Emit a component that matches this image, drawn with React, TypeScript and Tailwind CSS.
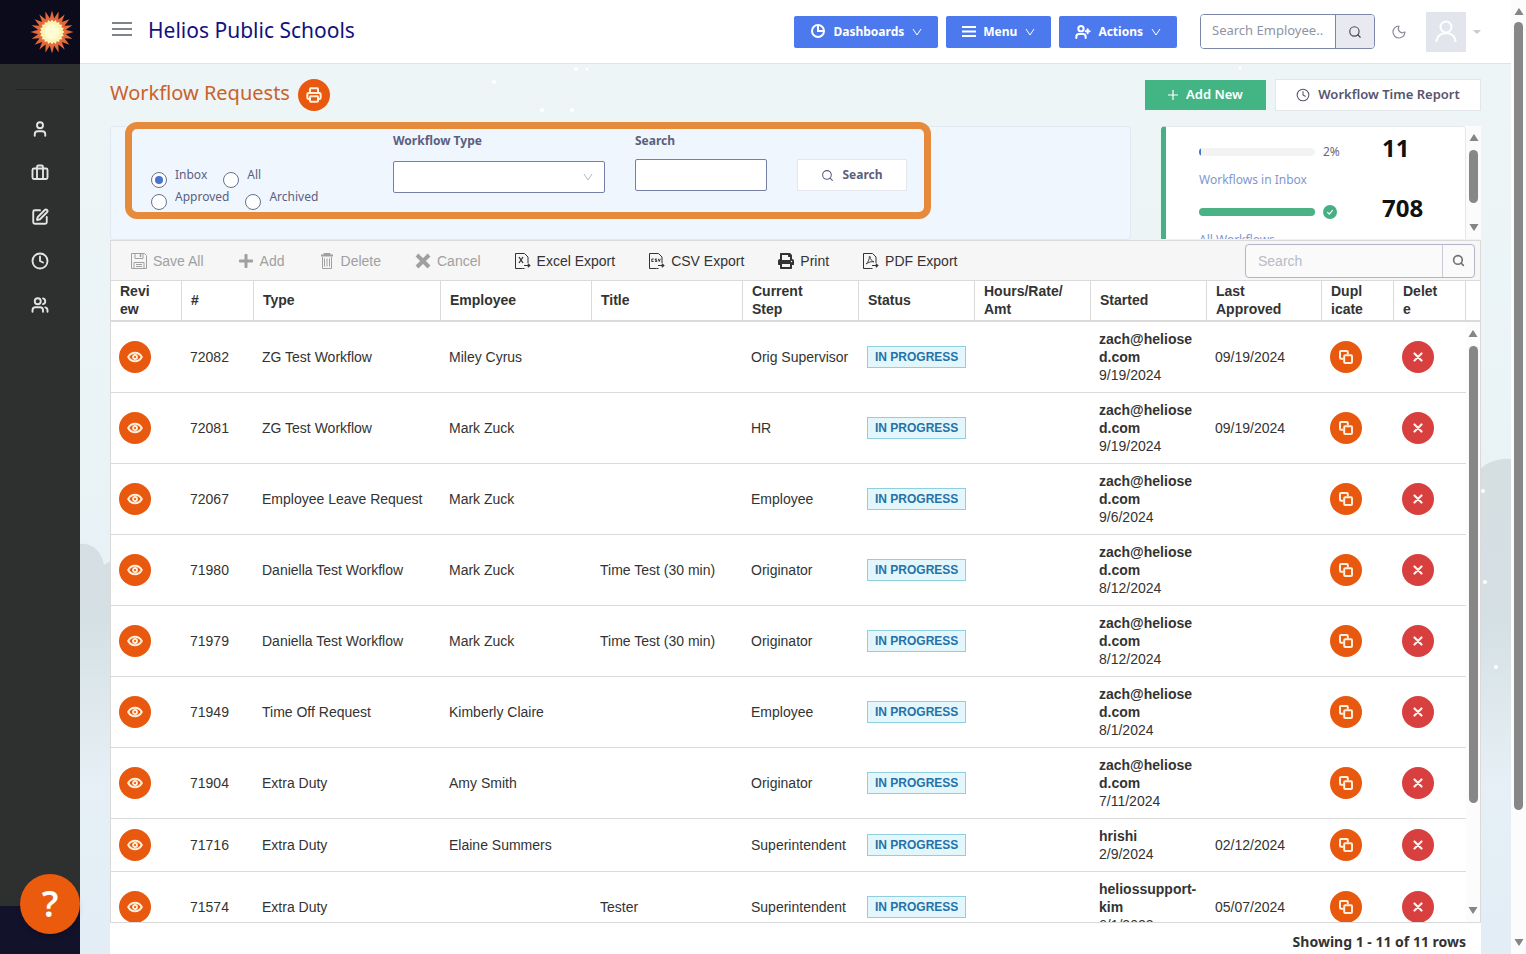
import { useState, type ReactNode } from "react";
import { Briefcase, Clock, Moon, Printer, Search, SquarePen, User, UserPlus, Users } from "lucide-react";
import { FaPlus, FaPrint } from "react-icons/fa";

type Request = {
  id: string;
  type: string;
  employee?: string;
  title?: string;
  step: string;
  startedBy: string;
  started: string;
  approved?: string;
};

const requests: Request[] = [
  { id: "72082", type: "ZG Test Workflow", employee: "Miley Cyrus", step: "Orig Supervisor", startedBy: "zach@heliosed.com", started: "9/19/2024", approved: "09/19/2024" },
  { id: "72081", type: "ZG Test Workflow", employee: "Mark Zuck", step: "HR", startedBy: "zach@heliosed.com", started: "9/19/2024", approved: "09/19/2024" },
  { id: "72067", type: "Employee Leave Request", employee: "Mark Zuck", step: "Employee", startedBy: "zach@heliosed.com", started: "9/6/2024" },
  { id: "71980", type: "Daniella Test Workflow", employee: "Mark Zuck", title: "Time Test (30 min)", step: "Originator", startedBy: "zach@heliosed.com", started: "8/12/2024" },
  { id: "71979", type: "Daniella Test Workflow", employee: "Mark Zuck", title: "Time Test (30 min)", step: "Originator", startedBy: "zach@heliosed.com", started: "8/12/2024" },
  { id: "71949", type: "Time Off Request", employee: "Kimberly Claire", step: "Employee", startedBy: "zach@heliosed.com", started: "8/1/2024" },
  { id: "71904", type: "Extra Duty", employee: "Amy Smith", step: "Originator", startedBy: "zach@heliosed.com", started: "7/11/2024" },
  { id: "71716", type: "Extra Duty", employee: "Elaine Summers", step: "Superintendent", startedBy: "hrishi", started: "2/9/2024", approved: "02/12/2024" },
  { id: "71574", type: "Extra Duty", title: "Tester", step: "Superintendent", startedBy: "heliossupport-kim", started: "6/1/2023", approved: "05/07/2024" },
];

const columns = [
  { label: "Revi\new", width: "w-[71px]" },
  { label: "#", width: "w-[72px]" },
  { label: "Type", width: "w-[187px]" },
  { label: "Employee", width: "w-[151px]" },
  { label: "Title", width: "w-[151px]" },
  { label: "Current\nStep", width: "w-[116px]" },
  { label: "Status", width: "w-[116px]" },
  { label: "Hours/Rate/\nAmt", width: "w-[116px]" },
  { label: "Started", width: "w-[116px]" },
  { label: "Last\nApproved", width: "w-[115px]" },
  { label: "Dupl\nicate", width: "w-[72px]" },
  { label: "Delet\ne", width: "w-[72px]" },
];

const filters = [["Inbox", "All"], ["Approved", "Archived"]];

const navItems = [
  { label: "Profile", Icon: User },
  { label: "Jobs", Icon: Briefcase },
  { label: "Forms", Icon: SquarePen },
  { label: "Time", Icon: Clock },
  { label: "People", Icon: Users },
];

function star(cx: number, cy: number, spikes: number, outer: number, inner: number) {
  return Array.from({ length: spikes * 2 }, (_, i) => {
    const r = i % 2 ? inner : outer;
    const a = (i * Math.PI) / spikes - Math.PI / 2;
    return `${(cx + r * Math.cos(a)).toFixed(2)},${(cy + r * Math.sin(a)).toFixed(2)}`;
  }).join(" ");
}

function SunLogo() {
  return (
    <svg viewBox="0 0 44 44" className="size-11" aria-hidden="true">
      <polygon points={star(22, 22, 20, 21.5, 14)} fill="#e2693a" />
      <polygon points={star(22, 22, 20, 12.5, 10.5)} fill="#fdf3b4" />
      <circle cx="22" cy="22" r="7.5" fill="#fffcd4" />
    </svg>
  );
}

function Chevron({ className }: { className: string }) {
  return (
    <svg viewBox="0 0 10 10" className={className} fill="none" stroke="currentColor" strokeWidth="1" aria-hidden="true">
      <path d="M1 2l4 6 4-6" />
    </svg>
  );
}

function PieIcon() {
  return (
    <svg viewBox="0 0 16 16" className="size-4" fill="none" stroke="currentColor" strokeWidth="2" aria-hidden="true">
      <circle cx="8" cy="7" r="6" />
      <path d="M8 1v6h6" />
    </svg>
  );
}

function BarsIcon() {
  return (
    <svg viewBox="0 0 14 12" className="h-3 w-[14px]" stroke="currentColor" strokeWidth="2.2" aria-hidden="true">
      <path d="M0 1h14M0 5.5h14M0 10h14" />
    </svg>
  );
}

function EyeIcon() {
  return (
    <svg viewBox="0 0 16 16" className="size-4" fill="none" aria-hidden="true">
      <path d="M1.2 8C2.8 5 5.2 3.8 8 3.8S13.2 5 14.8 8C13.2 11 10.8 12.2 8 12.2S2.8 11 1.2 8z" stroke="#fff0dc" strokeWidth="2" />
      <circle cx="8" cy="8" r="2" stroke="#fff0dc" strokeWidth="1.8" />
    </svg>
  );
}

function DuplicateIcon() {
  return (
    <svg viewBox="0 0 16 16" className="size-4" fill="none" stroke="#fff0dc" strokeWidth="2" aria-hidden="true">
      <path d="M5.500 9.800H3a1 1 0 0 1-1-1V3a1 1 0 0 1 1-1h5.800a1 1 0 0 1 1 1v2.500" />
      <rect x="6.200" y="6.200" width="7.800" height="7.800" rx="1" />
    </svg>
  );
}

function CrossIcon() {
  return (
    <svg viewBox="0 0 10 10" className="size-[10px]" stroke="#fff0ec" strokeWidth="2.200" strokeLinecap="round" aria-hidden="true">
      <path d="M1.500 1.500l7 7M8.500 1.500l-7 7" />
    </svg>
  );
}

function CancelIcon() {
  return (
    <svg viewBox="0 0 16 16" className="size-4" stroke="currentColor" strokeWidth="4" aria-hidden="true">
      <path d="M2 2l12 12M14 2L2 14" />
    </svg>
  );
}

function SaveIcon() {
  return (
    <svg viewBox="0 0 16 16" className="size-4" fill="none" stroke="currentColor" aria-hidden="true">
      <path d="M.5.500h13l2 2v13H.500z" />
      <path d="M4 .500v5h8v-5M3 15.500v-6h10v6M5 11.500h6M5 13.500h6" />
      <path d="M9.500 1v3" strokeWidth="1.500" />
    </svg>
  );
}

function TrashIcon() {
  return (
    <svg viewBox="0 0 16 16" className="size-4" fill="none" stroke="currentColor" aria-hidden="true">
      <path d="M2 2.500h12M5.500 2V.800h5V2" strokeWidth="1.800" />
      <path d="M3.500 4v11.500h9V4M5.500 5.500v8M8 5.500v8M10.500 5.500v8" />
    </svg>
  );
}

function ExportIcon({ kind }: { kind: "excel" | "csv" | "pdf" }) {
  return (
    <svg viewBox="0 0 16 16" className="size-4" fill="none" stroke="currentColor" aria-hidden="true">
      <path d="M7.500 15.500h-7V.500h9l3.500 3.500v6" />
      <path d="M7.500 15.500h2M9 12.500h5.500M12.800 10.800l2 1.700-2 1.700" strokeWidth="1.200" />
      {kind === "excel" && <path d="M4 4l4 6M8 4l-4 6" strokeWidth="1.300" />}
      {kind === "csv" && <path d="M4.600 6H2.800v2.500h1.800M7.800 6H6.200v1.200h1.600v1.300H6.200M9.300 5.800l1 2.700 1-2.700" />}
      {kind === "pdf" && <path d="M3 11c2-1.500 3.500-4.500 3.300-7.300 0-.6 1-.6.900.2C7 6 9 8.500 11 8.800c-2.500-.6-5.500.4-8 2.200z" strokeWidth=".9" />}
    </svg>
  );
}

function Arrow({ down = false }: { down?: boolean }) {
  return (
    <svg viewBox="0 0 10 8" className="h-2 w-[10px] shrink-0" fill="#858585" aria-hidden="true">
      <path d={down ? "M.5 1h9L5.600 7.300q-.6.700-1.200 0z" : "M.5 7h9L5.600.700q-.6-.7-1.200 0z"} />
    </svg>
  );
}

function ToolButton({ icon, label, disabled }: { icon: ReactNode; label: string; disabled?: boolean }) {
  return (
    <button
      type="button"
      disabled={disabled}
      className="flex items-center gap-[6px] whitespace-nowrap text-[#333] disabled:text-[#a0a0a0]"
    >
      {icon}
      {label}
    </button>
  );
}

function MenuButton({ icon, label }: { icon: ReactNode; label: string }) {
  return (
    <button
      type="button"
      className="flex h-8 items-center gap-[7px] rounded-xs bg-[#4c79ee] px-4 text-[12px] font-bold text-white"
    >
      {icon}
      {label}
      <Chevron className="ml-px size-[10px]" />
    </button>
  );
}

function Clouds() {
  return (
    <svg className="absolute inset-0 size-full" preserveAspectRatio="none" viewBox="0 0 1431 890" aria-hidden="true">
      <defs>
        <linearGradient id="cloud" gradientUnits="userSpaceOnUse" x1="0" y1="395" x2="0" y2="720">
          <stop offset="0" stopColor="#d5dfe2" />
          <stop offset="0.5" stopColor="#d5e0e4" />
          <stop offset="1" stopColor="#d5e0e4" stopOpacity="0" />
        </linearGradient>
      </defs>
      <g fill="url(#cloud)">
        <path d="M0 480c12-2 22 8 24 21 6-6 16-4 20 6v213H0z" />
        <path d="M1396 410c8-12 24-16 35-15v325h-35z" />
      </g>
      <g fill="#fff">
        <circle cx="496" cy="5" r="2" />
        <circle cx="507" cy="5" r="1.500" />
        <circle cx="414" cy="18" r="2" />
        <circle cx="492" cy="46" r="2" />
        <circle cx="462" cy="46" r="2" />
        <circle cx="1160" cy="4" r="1.500" />
        <circle cx="1403" cy="427" r="2" />
        <circle cx="1405" cy="518" r="2" />
        <circle cx="1416" cy="603" r="2" />
      </g>
    </svg>
  );
}

function Sidebar() {
  return (
    <nav className="flex w-20 shrink-0 flex-col bg-[#2e2f2f]">
      <a href="#home" aria-label="Home" className="flex h-16 items-center justify-end bg-[#0b0b1b] pr-[6px]">
        <SunLogo />
      </a>
      <div className="mx-4 mt-[25px] border-t border-[#20202e]" />
      <ul className="mt-[30px] flex flex-col items-center gap-[26px]">
        {navItems.map(({ label, Icon }) => (
          <li key={label}>
            <a href={`#${label.toLowerCase()}`} aria-label={label} className="block text-[#e4e4e4]">
              <Icon className="size-[18px]" strokeWidth={2.500} />
            </a>
          </li>
        ))}
      </ul>
      <div className="mt-auto h-12 bg-[#12122b]" />
    </nav>
  );
}

function Header() {
  return (
    <header className="flex h-16 shrink-0 items-center border-b border-[#dde3e6] bg-white pr-[31px] pl-8">
      <button type="button" aria-label="Toggle sidebar" className="mb-1.5 text-[#555b66]">
        <svg viewBox="0 0 20 14" className="h-[14px] w-5" stroke="currentColor" strokeWidth="1.600" aria-hidden="true">
          <path d="M0 1h20M0 7h20M0 13h20" />
        </svg>
      </button>
      <h1 className="mb-1 ml-4 text-[21px] leading-8 whitespace-nowrap text-[#12127c]">Helios Public Schools</h1>
      <div className="ml-auto flex gap-2">
        <MenuButton icon={<PieIcon />} label="Dashboards" />
        <MenuButton icon={<BarsIcon />} label="Menu" />
        <MenuButton icon={<UserPlus className="size-4" strokeWidth={3} />} label="Actions" />
      </div>
      <div className="ml-[23px] flex h-[35px] overflow-hidden rounded-sm border border-[#7c86a8]">
        <input
          aria-label="Search employee"
          placeholder="Search Employee.."
          className="w-[134px] bg-white pb-0.5 pl-[11px] text-[13px] placeholder:text-[#8f93a3] focus:outline-none"
        />
        <button type="button" aria-label="Find employee" className="grid w-[39px] place-items-center border-l border-[#7c86a8] bg-[#e8eaf0] text-[#444b58]">
          <Search className="size-[14px]" />
        </button>
      </div>
      <button type="button" aria-label="Dark mode" className="ml-4 text-[#8b8b98]">
        <Moon className="size-4" strokeWidth={1.800} />
      </button>
      <button type="button" aria-label="Account" className="-mr-[30px] ml-[19px] flex items-center gap-[7px] pr-[29px]">
        <span className="grid size-10 place-items-center bg-[#e2e6ec] text-white">
          <svg viewBox="0 0 22 24" className="h-6 w-[22px]" fill="none" stroke="currentColor" strokeWidth="2" aria-hidden="true">
            <circle cx="11" cy="7" r="5.500" />
            <path d="M1.500 22c0-5.500 4-9 9.500-9s9.500 3.500 9.500 9" />
          </svg>
        </span>
        <svg viewBox="0 0 8 4" className="h-1 w-2" fill="#c9c9cf" aria-hidden="true">
          <path d="M0 0h8L4 4z" />
        </svg>
      </button>
    </header>
  );
}

function FilterPanel() {
  const [selected, setSelected] = useState("Inbox");

  return (
    <section className="h-[114px] flex-1 rounded-sm border border-[#e2e9f0] bg-[#eff6fe] pt-[5px] pl-10">
      <form className="relative flex w-fit gap-[30px] text-[#5a5f80]" onSubmit={(e) => e.preventDefault()}>
        <fieldset aria-label="Request filter" className="w-[212px] pt-[34px] text-[12px]">
          {filters.map((row) => (
            <div key={row[0]} className="flex h-[22px] gap-4">
              {row.map((name) => (
                <label key={name} className="flex items-end gap-2">
                  <input
                    type="radio"
                    name="status"
                    checked={selected === name}
                    onChange={() => setSelected(name)}
                    className="grid size-4 appearance-none place-items-center rounded-full border border-[#67718f] bg-white before:size-2 before:rounded-full checked:before:bg-[#4a72cf]"
                  />
                  <span className="pb-1 leading-[18px]">{name}</span>
                </label>
              ))}
            </div>
          ))}
        </fieldset>
        <div className="w-[212px]">
          <label htmlFor="workflow-type" className="mb-[11px] block text-[12px] leading-[18px] font-bold">
            Workflow Type
          </label>
          <div className="relative">
            <select id="workflow-type" className="block h-8 w-full appearance-none rounded-xs border border-[#7580a6] bg-white px-3 text-[13px]">
              <option value=""></option>
            </select>
            <Chevron className="pointer-events-none absolute top-[11px] right-3 size-[10px] text-[#b5b8c0]" />
          </div>
        </div>
        <div className="w-[132px]">
          <label htmlFor="workflow-search" className="mb-[9px] block text-[12px] leading-[18px] font-bold">
            Search
          </label>
          <input id="workflow-search" className="block h-8 w-full rounded-xs border border-[#7580a6] bg-white px-2 text-[13px]" />
        </div>
        <button type="submit" className="mt-[27px] flex h-8 w-[110px] items-center justify-center gap-2 border border-[#e4e8ee] bg-white text-[12px] font-bold">
          <Search className="size-[13px]" />
          Search
        </button>
        <div className="pointer-events-none absolute -top-[10px] -right-6 -left-[26px] h-[97px] rounded-xl border-[7px] border-[#e68b3c]" />
      </form>
    </section>
  );
}

function Stat({ percent, value, label }: { percent: number; value: string; label: string }) {
  const done = percent === 100;
  return (
    <div className="mb-0.5">
      <div className="flex h-8 items-center">
        <div className="mt-2 h-2 w-[116px] overflow-hidden rounded-full bg-[#f3f3f3]">
          <div className={done ? "h-full bg-[#4ab284]" : "h-full bg-[#4a72cf]"} style={{ width: `${percent}%` }} />
        </div>
        <div className="mt-2 ml-2 w-[59px] text-[12px] text-[#666a80]">
          {done ? (
            <svg viewBox="0 0 14 14" className="size-[14px]" role="img" aria-label="Complete">
              <circle cx="7" cy="7" r="7" fill="#45b083" />
              <path d="M4.300 7.200l2 2 3.400-4" fill="none" stroke="#fff" strokeWidth="1.200" />
            </svg>
          ) : (
            `${percent}%`
          )}
        </div>
        <strong className="text-[24px] leading-8 text-[#111]">{value}</strong>
      </div>
      <p className="mt-1.5 text-[12px] leading-5 text-[#7e98cf]">{label}</p>
    </div>
  );
}

function StatsPanel() {
  return (
    <aside className="flex h-[113px] w-80 bg-white">
      <div className="flex-1 overflow-hidden rounded-t-sm border-t border-r border-l-[5px] border-[#e4e8ec] border-l-[#45b082] pt-[5px] pl-[33px]">
        <Stat percent={2} value="11" label="Workflows in Inbox" />
        <Stat percent={100} value="708" label="All Workflows" />
      </div>
      <div className="flex w-[15px] flex-col items-center bg-[#fbfbfb] pt-2 pb-2">
        <Arrow />
        <div className="mt-2 w-[9px] flex-[53] rounded-full bg-[#878787]" />
        <div className="flex-[20]" />
        <Arrow down />
      </div>
    </aside>
  );
}

function RoundButton({ label, danger, children }: { label: string; danger?: boolean; children: ReactNode }) {
  return (
    <button
      type="button"
      aria-label={label}
      className={`grid size-8 place-items-center rounded-full ${danger ? "bg-[#d8403f]" : "bg-[#e8590f]"}`}
    >
      {children}
    </button>
  );
}

function RequestRow({ request }: { request: Request }) {
  return (
    <tr className="[&>td]:border-b [&>td]:border-[#dadada] [&>td]:px-2 [&>td]:py-2">
      <td>
        <RoundButton label={`Review ${request.id}`}>
          <EyeIcon />
        </RoundButton>
      </td>
      <td>{request.id}</td>
      <td>{request.type}</td>
      <td>{request.employee}</td>
      <td>{request.title}</td>
      <td className="whitespace-nowrap">{request.step}</td>
      <td>
        <span className="inline-block h-[22px] border border-[#8fcfe0] bg-[#e3f6fc] px-[7px] align-middle text-[12px] leading-5 font-bold whitespace-nowrap text-[#2572a8]">
          IN PROGRESS
        </span>
      </td>
      <td></td>
      <td>
        <strong className="block break-words">{request.startedBy}</strong>
        {request.started}
      </td>
      <td>{request.approved}</td>
      <td>
        <RoundButton label={`Duplicate ${request.id}`}>
          <DuplicateIcon />
        </RoundButton>
      </td>
      <td>
        <RoundButton label={`Delete ${request.id}`} danger>
          <CrossIcon />
        </RoundButton>
      </td>
    </tr>
  );
}

function RequestGrid() {
  return (
    <section className="flex min-h-0 flex-1 flex-col border border-t-0 border-[#dadada] bg-white font-['Liberation_Sans',sans-serif] text-[14px] leading-[18px] text-[#333]">
      <div className="flex h-[41px] shrink-0 items-center gap-[34px] border-y border-[#dadada] bg-[#f6f6f6] pr-[5px] pl-5">
        <ToolButton icon={<SaveIcon />} label="Save All" disabled />
        <ToolButton icon={<FaPlus className="size-4" />} label="Add" disabled />
        <ToolButton icon={<TrashIcon />} label="Delete" disabled />
        <ToolButton icon={<CancelIcon />} label="Cancel" disabled />
        <ToolButton icon={<ExportIcon kind="excel" />} label="Excel Export" />
        <ToolButton icon={<ExportIcon kind="csv" />} label="CSV Export" />
        <ToolButton icon={<FaPrint className="size-4" />} label="Print" />
        <ToolButton icon={<ExportIcon kind="pdf" />} label="PDF Export" />
        <div className="ml-auto flex h-[34px] w-[230px] overflow-hidden rounded-sm border border-[#b3b5c4] bg-[#fafafa]">
          <input aria-label="Search grid" placeholder="Search" className="min-w-0 flex-1 pl-3 placeholder:text-[#b9bac6] focus:outline-none" />
          <button type="button" aria-label="Search" className="grid w-8 place-items-center border-l border-[#c9cad4] text-[#707070]">
            <Search className="size-[13px]" strokeWidth={3} />
          </button>
        </div>
      </div>
      <div className="flex min-h-0 flex-1">
        <div className="min-w-0 flex-1 overflow-hidden">
          <table className="w-full table-fixed border-separate border-spacing-0">
            <thead>
              <tr>
                {columns.map(({ label, width }) => (
                  <th
                    key={label}
                    scope="col"
                    className={`h-[41px] border-r border-b-2 border-[#dadada] p-0 pb-0.5 pl-[9px] text-left font-bold whitespace-pre-line ${width}`}
                  >
                    {label}
                  </th>
                ))}
              </tr>
            </thead>
            <tbody>
              {requests.map((request) => (
                <RequestRow key={request.id} request={request} />
              ))}
            </tbody>
          </table>
        </div>
        <div className="flex w-[14px] flex-col items-center bg-[#fcfcfc] pb-2">
          <div className="h-[41px] w-full shrink-0 border-b-2 border-[#dadada] bg-white" />
          <div className="h-2 shrink-0" />
          <Arrow />
          <div className="mt-2 w-[9px] flex-[458] rounded-full bg-[#878787]" />
          <div className="flex-[103]" />
          <Arrow down />
        </div>
      </div>
    </section>
  );
}

export default function App() {
  return (
    <div className="relative flex h-screen overflow-hidden bg-white font-['Noto_Sans',sans-serif]">
      <Sidebar />
      <div className="flex min-w-0 flex-1 flex-col">
        <Header />
        <main className="relative flex min-h-0 flex-1 flex-col bg-linear-to-b from-[#eef5f6] via-[#e9f3f6] to-[#e3edf5] px-[30px] pt-[15px]">
          <Clouds />
          <div className="relative flex min-h-0 flex-1 flex-col">
            <div className="mb-[15px] flex h-8 items-center">
              <h2 className="mb-1 text-[20px] leading-7 text-[#c9622a]">Workflow Requests</h2>
              <button type="button" aria-label="Print" className="ml-2 grid size-8 place-items-center rounded-full bg-[#e8590f] text-[#fff0dc]">
                <Printer className="size-4" strokeWidth={3} />
              </button>
              <button type="button" className="ml-auto flex h-[30px] w-[121px] items-center justify-center gap-2 bg-[#43b584] text-[13px] font-semibold text-white">
                <svg viewBox="0 0 10 10" className="size-[10px]" stroke="currentColor" strokeWidth="1.200" aria-hidden="true">
                  <path d="M5 0v10M0 5h10" />
                </svg>
                Add New
              </button>
              <button type="button" className="ml-[9px] flex h-8 w-[206px] items-center justify-center gap-2 border border-[#e3e7ea] bg-white text-[13px] font-semibold text-[#56546e]">
                <Clock className="size-[14px]" strokeWidth={1.800} />
                Workflow Time Report
              </button>
            </div>
            <div className="flex gap-[30px]">
              <FilterPanel />
              <StatsPanel />
            </div>
            <RequestGrid />
            <p className="h-[31px] shrink-0 bg-white pt-2 pr-[15px] text-right text-[14px] leading-[22px] font-bold text-[#333]">
              Showing 1 - 11 of 11 rows
            </p>
          </div>
        </main>
      </div>
      <div className="flex w-[15px] shrink-0 flex-col items-center bg-[#fcfcfc] py-2">
        <Arrow />
        <div className="mt-[6px] w-[9px] flex-[788] rounded-full bg-[#878787]" />
        <div className="flex-[128]" />
        <Arrow down />
      </div>
      <button
        type="button"
        aria-label="Help"
        className="absolute bottom-5 left-5 grid size-[60px] place-items-center rounded-full bg-[#ea5b0e] text-[36px] leading-none font-semibold text-white shadow-md"
      >
        ?
      </button>
    </div>
  );
}
